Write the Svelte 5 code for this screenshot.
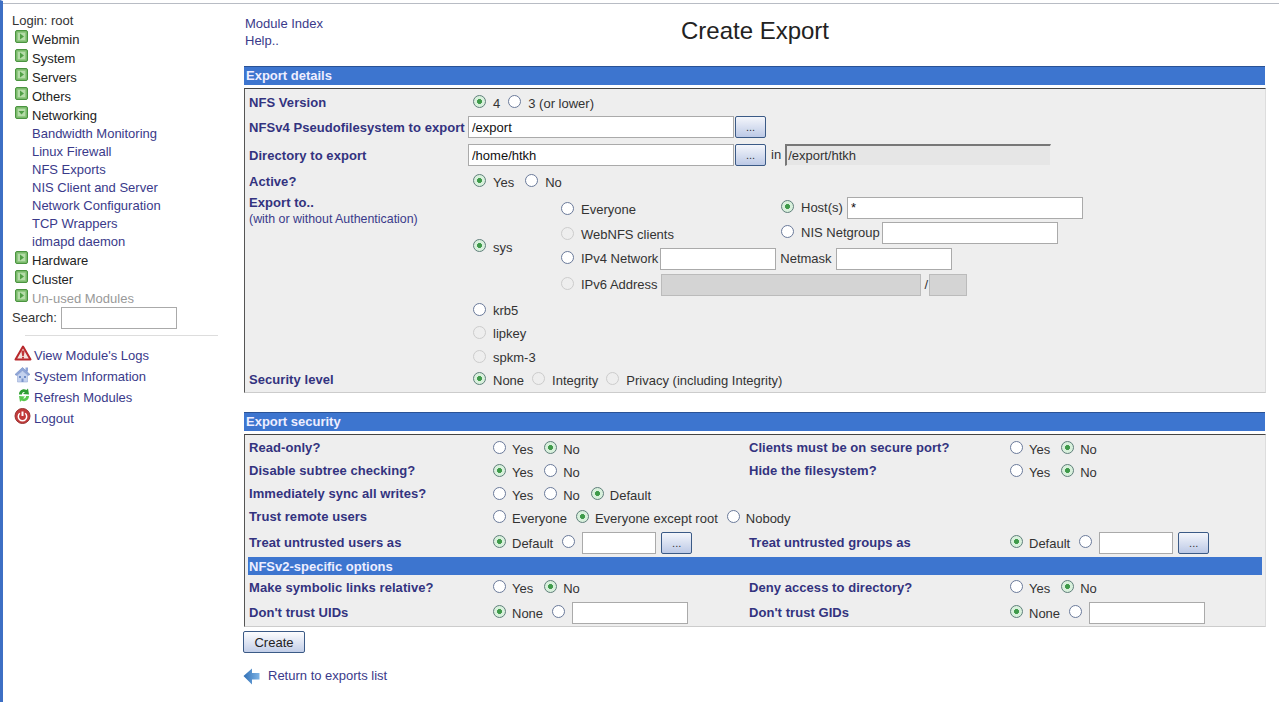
<script>
  const closedMods = ['Webmin', 'System', 'Servers', 'Others'];
  const subLinks = ['Bandwidth Monitoring', 'Linux Firewall', 'NFS Exports', 'NIS Client and Server', 'Network Configuration', 'TCP Wrappers', 'idmapd daemon'];
</script>

{#snippet sq(open)}
  <svg class="sq" width="13" height="14" viewBox="0 0 13 14">
    <rect x="0.5" y="0.5" width="12" height="12" rx="1.5" fill="#79b96a" stroke="#4a9440"/>
    <rect x="2.5" y="2.5" width="8" height="8" fill="#b5dca9" stroke="#8cc67e" stroke-width="0.6"/>
    {#if open}
      <path d="M3.500 5h6l-3 3.500z" fill="#4f9f45"/>
    {:else}
      <path d="M5 3.500v6l4-3z" fill="#4f9f45"/>
    {/if}
  </svg>
{/snippet}

{#snippet r(checked = false, disabled = false)}
  <input class="rd" type="radio" {checked} {disabled} />
{/snippet}

{#snippet yn(yes)}
  <div class="opts yn">
    {@render r(yes)}<span class="t">Yes</span>{@render r(!yes)}<span class="t">No</span>
  </div>
{/snippet}

{#snippet browse()}
  <button class="dots" type="button">...</button>
{/snippet}

<div class="page">
  <aside class="side">
    <div class="line login">Login: root</div>
    {#each closedMods as m}
      <div class="line mod">{@render sq(false)}<span>{m}</span></div>
    {/each}
    <div class="line mod">{@render sq(true)}<span>Networking</span></div>
    {#each subLinks as s}
      <a class="sub" href="#s">{s}</a>
    {/each}
    <div class="line mod">{@render sq(false)}<span>Hardware</span></div>
    <div class="line mod">{@render sq(false)}<span>Cluster</span></div>
    <div class="line mod unused">{@render sq(false)}<span>Un-used Modules</span></div>
    <div class="search"><label for="q">Search:</label><input id="q" class="in srch" type="text" /></div>
    <hr class="rule" />
    <a class="act" href="#l">
      <svg width="18" height="17" viewBox="0 0 18 17"><path d="M9 1.500 16.500 14.500H1.500z" fill="#f3e3de" stroke="#b8282c" stroke-width="2" stroke-linejoin="round"/><path d="M7.300 5.500h3.400L9.800 11H8.200z" fill="#c0383a"/><rect x="8" y="11.800" width="2" height="1.800" fill="#c0383a"/></svg>
      View Module's Logs
    </a>
    <a class="act" href="#i">
      <svg width="18" height="17" viewBox="0 0 18 17"><rect x="11.500" y="1.500" width="2.500" height="4" fill="#8fa6d8"/><path d="M1 8.500 8.500 1.500 16 8.500 14 9.500 8.500 4.500 3 9.500z" fill="#8fa6d8" stroke="#7089c2" stroke-width="0.600"/><path d="M3.500 9 8.500 5l5 4v7h-10z" fill="#c3d1ee" stroke="#98abd6" stroke-width="0.600"/><path d="M5 10h2v2H5zM10 10h2v2h-2z" fill="#6f8cc7"/><path d="M7.500 12.500h2V16h-2z" fill="#7b94cb"/></svg>
      System Information
    </a>
    <a class="act" href="#r">
      <svg width="18" height="17" viewBox="0 0 18 17"><path d="M5 7.500C5 3.500 9 1 12.500 3L14 1.500l1 6-6-.5 1.800-1.800C9 4.500 8 6 8 7.500z" fill="#2f9e33"/><path d="M15 9c0 4-4 6.500-7.500 4.500L6 15l-1-6 6 .5-1.800 1.800c1.800.7 2.800-.8 2.800-2.300z" fill="#58c94f"/></svg>
      Refresh Modules
    </a>
    <a class="act" href="#o">
      <svg width="18" height="17" viewBox="0 0 18 17"><circle cx="8.500" cy="8" r="7.500" fill="#c23a3a" stroke="#96302f"/><path d="M8.500 3.500v4.500" stroke="#fff" stroke-width="2"/><path d="M5.800 5.300a4.200 4.200 0 1 0 5.400 0" fill="none" stroke="#fff" stroke-width="1.500"/></svg>
      Logout
    </a>
  </aside>

  <main class="main">
    <header class="head">
      <div class="hlinks"><a href="#m">Module Index</a><a href="#h">Help..</a></div>
      <h1>Create Export</h1>
    </header>

    <section class="sec first">
      <h2 class="bar">Export details</h2>
      <div class="body">
        <div class="row r1"><b>NFS Version</b><div class="opts in5">{@render r(true)}<span class="t">4</span>{@render r()}<span class="t">3 (or lower)</span></div></div>
        <div class="row r2"><b class="lo">NFSv4 Pseudofilesystem to export</b><div class="fld"><input class="in path" type="text" value="/export" />{@render browse()}</div></div>
        <div class="row r3"><b class="lo">Directory to export</b><div class="fld"><input class="in path" type="text" value="/home/htkh" />{@render browse()}<span class="inw">in</span><input class="ro" type="text" readonly value="/export/htkh" /></div></div>
        <div class="row r4"><b>Active?</b><div class="opts in5 yn">{@render r(true)}<span class="t">Yes</span>{@render r()}<span class="t">No</span></div></div>
        <div class="row r5">
          <div class="exlabel"><b>Export to..</b><small>(with or without Authentication)</small></div>
          <div class="exwrap">
            <div class="sysrow">
              <div class="sysopt">{@render r(true)}<span class="t">sys</span></div>
              <div class="hosts">
                <div class="hr h1"><span class="c1">{@render r()}<span class="t">Everyone</span></span><span class="c2 up">{@render r(true)}<span class="t">Host(s)</span><input class="in wh" type="text" value="*" /></span></div>
                <div class="hr h2"><span class="c1">{@render r(false, true)}<span class="t">WebNFS clients</span></span><span class="c2 up">{@render r()}<span class="t">NIS Netgroup</span><input class="in wn" type="text" /></span></div>
                <div class="hr h3"><span class="c1 wide">{@render r()}<span class="t">IPv4 Network</span><input class="in w4 first4" type="text" /><span class="t nm">Netmask</span><input class="in w4" type="text" /></span></div>
                <div class="hr h4"><span class="c1 wide">{@render r(false, true)}<span class="t">IPv6 Address</span><input class="in dis w6" type="text" disabled /><span class="t sl">/</span><input class="in dis ws" type="text" disabled /></span></div>
              </div>
            </div>
            <div class="auth a1">{@render r()}<span class="t">krb5</span></div>
            <div class="auth a2">{@render r(false, true)}<span class="t">lipkey</span></div>
            <div class="auth a3">{@render r(false, true)}<span class="t">spkm-3</span></div>
          </div>
        </div>
        <div class="row r6"><b>Security level</b><div class="opts in5">{@render r(true)}<span class="t">None</span>{@render r(false, true)}<span class="t">Integrity</span>{@render r(false, true)}<span class="t">Privacy (including Integrity)</span></div></div>
      </div>
    </section>

    <section class="sec second">
      <h2 class="bar">Export security</h2>
      <div class="body two">
        <div class="row2 h23"><b class="hi">Read-only?</b>{@render yn(false)}<b class="hi">Clients must be on secure port?</b>{@render yn(false)}</div>
        <div class="row2 h23"><b class="hi">Disable subtree checking?</b>{@render yn(true)}<b class="hi">Hide the filesystem?</b>{@render yn(false)}</div>
        <div class="row2 h23"><b class="hi">Immediately sync all writes?</b><div class="opts yn">{@render r()}<span class="t">Yes</span>{@render r()}<span class="t">No</span>{@render r(true)}<span class="t">Default</span></div><i></i><i></i></div>
        <div class="row2 h23"><b class="hi">Trust remote users</b><div class="opts span3">{@render r()}<span class="t">Everyone</span>{@render r(true)}<span class="t">Everyone except root</span>{@render r()}<span class="t">Nobody</span></div></div>
        <div class="row2 h28"><b>Treat untrusted users as</b><div class="opts">{@render r(true)}<span class="t">Default</span>{@render r()}<input class="in ug" type="text" />{@render browse()}</div><b>Treat untrusted groups as</b><div class="opts">{@render r(true)}<span class="t">Default</span>{@render r()}<input class="in ug" type="text" />{@render browse()}</div></div>
        <h3 class="band">NFSv2-specific options</h3>
        <div class="row2 h25"><b>Make symbolic links relative?</b>{@render yn(false)}<b>Deny access to directory?</b>{@render yn(false)}</div>
        <div class="row2 h25"><b>Don't trust UIDs</b><div class="opts">{@render r(true)}<span class="t">None</span>{@render r()}<input class="in uid" type="text" /></div><b>Don't trust GIDs</b><div class="opts">{@render r(true)}<span class="t">None</span>{@render r()}<input class="in uid" type="text" /></div></div>
      </div>
    </section>

    <button class="create" type="button">Create</button>
    <a class="back" href="#b">
      <svg width="18" height="18" viewBox="0 0 18 18"><defs><linearGradient id="bk" x1="0" y1="0" x2="1" y2="0"><stop offset="0" stop-color="#2f6fb5"/><stop offset="1" stop-color="#7fb4e6"/></linearGradient></defs><path d="M0.500 9 9 1.500V6h7.500v6.500H9v5z" fill="url(#bk)"/></svg>
      Return to exports list
    </a>
  </main>
</div>

<style>
  :global(body) { margin: 0; background: #fff; }
  .page {
    width: 1279px; height: 702px; box-sizing: border-box; display: flex;
    border-left: 3px solid #3d6fc4; border-top: 1px solid transparent;
    font: 13px/16px "Liberation Sans", Arial, sans-serif; color: #333; overflow: hidden;
    position: relative;
    background: linear-gradient(#b8bcc4, #b8bcc4) no-repeat 0 2px / 100% 1px;
  }
  a { color: #3a3a8a; text-decoration: none; }

  .side { width: 241px; box-sizing: border-box; padding: 11px 0 0 9px; flex: none; }
  .line { height: 19px; display: flex; align-items: center; }
  .login { height: 17px; }
  .mod { padding-left: 3px; gap: 4px; color: #222; }
  .mod span { position: relative; top: 1px; }
  .sq { position: relative; top: -2px; flex: none; }
  .unused { color: #999; }
  .unused span { color: #999; }
  .sub { display: block; height: 18px; line-height: 18px; padding-left: 20px; position: relative; top: 1px; }
  .search { display: flex; align-items: center; gap: 4px; height: 21px; }
  .srch { width: 116px; height: 22px; flex: none; }
  .rule { margin: 7px 0 9px 13px; width: 193px; height: 1px; border: 0; background: #ddd; }
  .act { display: flex; align-items: center; gap: 2px; height: 21px; padding-left: 2px; }
  .act svg { position: relative; top: -2px; }

  .main { flex: 1; min-width: 0; padding-left: 0; }
  .head { height: 65px; position: relative; display: flex; }
  .hlinks { padding: 14px 0 0 1px; display: flex; flex-direction: column; }
  .hlinks a { height: 17px; line-height: 17px; }
  h1 { position: absolute; left: 0; width: 1022px; text-align: center; margin: 15px 0 0; font: 400 24px/30px "Liberation Sans", Arial, sans-serif; color: #222; }

  .sec { width: 1022px; margin-left: 0; }
  .bar { margin: 0 1px 3px 0; height: 19px; box-sizing: border-box; background: #3d75cf; border-top: 1px solid #2a5295; color: #eef; font: 700 13px/18px "Liberation Sans", Arial, sans-serif; padding-left: 2px; }
  .body { background: #eee; border-left: 1px solid #555; border-right: 1px solid #ddd; border-bottom: 1px solid #ccc; border-top: 1px solid #444; box-sizing: border-box; padding-top: 3px; height: 305px; }
  .second { margin-top: 19px; }
  .two { height: 193px; padding-top: 2px; }
  b { font-weight: 700; color: #33337f; padding-left: 4px; letter-spacing: 0.06px; }
  .lo { position: relative; top: 1px; }
  .hi { position: relative; top: -1px; }

  .row { display: grid; grid-template-columns: 223px 1fr; align-items: center; }
  .r1 { height: 22px; } .r2 { height: 26px; } .r3 { height: 30px; } .r4 { height: 24px; } .r6 { height: 22px; }
  .r5 { height: 175px; align-items: start; }
  .opts { display: flex; align-items: center; }
  .in5 { padding-left: 5px; }
  .in5 .rd, .sysopt .rd, .auth .rd { margin-right: 7px; }
  .t { color: #333; position: relative; top: 1px; }
  .rd {
    appearance: none; -webkit-appearance: none; width: 13px; height: 13px; margin: 0 6px 3px 0; flex: none;
    border: 1px solid #6a7a9a; border-radius: 50%; background: #fff; box-sizing: border-box; position: relative;
  }
  .rd:checked { border-color: #5f7f7a; background: radial-gradient(circle, #3f9a4a 0 2.2px, #d8f0dc 2.800px); }
  .rd:disabled { border-color: #ccc; background: #eee; }
  .opts .t + .rd { margin-left: 9px; }
  .opts.in5 .t + .rd { margin-left: 8px; }
  .opts.yn .t + .rd { margin-left: 11px; }
  .hr .t, .auth .t { top: 0; }

  .in { box-sizing: border-box; border: 1px solid #aaa; background: #fff; font: 13px "Liberation Sans", Arial, sans-serif; color: #111; padding: 0 3px; border-radius: 0; outline: 0; margin: 0; }
  .fld { display: flex; align-items: center; }
  .path { width: 266px; height: 22px; }
  .dots { width: 31px; height: 22px; margin-left: 1px; box-sizing: border-box; border: 1px solid #3b5a86; border-radius: 2px; background: linear-gradient(#f4f6fb, #bcc9e6); font: 11px "Liberation Sans", Arial, sans-serif; color: #333; padding: 0; }
  .inw { margin: 0 4px 0 5px; color: #333; }
  .ro { width: 266px; height: 22px; box-sizing: border-box; background: #e6e6e6; border: 1px solid #eee; border-top: 2px solid #777; border-left: 2px solid #777; font: 13px "Liberation Sans", Arial, sans-serif; color: #333; padding: 0 1px; outline: 0; }

  .exlabel { display: flex; flex-direction: column; padding-top: 1px; }
  .exlabel b { line-height: 16px; }
  small { font-size: 12.400px; color: #3a3a8a; padding-left: 4px; line-height: 16px; }
  .sysrow { display: flex; height: 107px; align-items: center; padding-left: 5px; }
  .sysopt { width: 88px; display: flex; align-items: center; position: relative; top: -1px; }
  .hosts { padding-top: 3px; align-self: flex-start; }
  .hr { display: flex; align-items: center; }
  .h1 { height: 25px; } .h2 { height: 26px; } .h3 { height: 22px; } .h4 { height: 29px; }
  .c1 { width: 220px; display: flex; align-items: center; }
  .c1.wide { width: auto; }
  .c2 { display: flex; align-items: center; }
  .up { position: relative; top: -2px; }
  .c1 .rd, .c2 .rd { margin-right: 7px; }
  .wh { width: 236px; height: 22px; margin-left: 4px; }
  .wn { width: 176px; height: 22px; margin-left: 2px; }
  .w4 { width: 116px; height: 22px; margin-left: 4px; flex: none; }
  .first4 { margin-left: 2px; }
  .nm { margin-left: 4px; }
  .w6 { width: 260px; height: 22px; margin-left: 3px; flex: none; }
  .sl { margin-left: 4px; }
  .ws { width: 38px; height: 22px; margin-left: 1px; flex: none; }
  .dis { background: #d4d4d4; border-color: #bbb; }
  .auth { display: flex; align-items: center; padding-left: 5px; }
  .a1 { height: 20px; } .a2 { height: 26px; } .a3 { height: 22px; }

  .row2 { display: grid; grid-template-columns: 248px 252px 265px 1fr; align-items: center; }
  .h23 { height: 23px; } .h25 { height: 25px; } .h28 { height: 28px; }
  .span3 { grid-column: span 3; }
  .ug { width: 74px; height: 22px; margin-left: 1px; }
  .uid { width: 116px; height: 22px; margin-left: 1px; }
  .opts .in + .dots { margin-left: 5px; }
  .band { margin: 0 3px; height: 18px; background: #3d75cf; color: #eef; font: 700 13px/19px "Liberation Sans", Arial, sans-serif; padding-left: 1px; }

  .create { display: block; margin: 4px 0 0 -1px; width: 62px; height: 22px; box-sizing: border-box; border: 1px solid #3b5a86; border-radius: 2px; background: linear-gradient(#fdfdfe, #c2cee8); font: 13px "Liberation Sans", Arial, sans-serif; color: #222; padding: 0; }
  .back { display: flex; align-items: center; gap: 7px; margin: 13px 0 0 -1px; height: 20px; }
</style>
